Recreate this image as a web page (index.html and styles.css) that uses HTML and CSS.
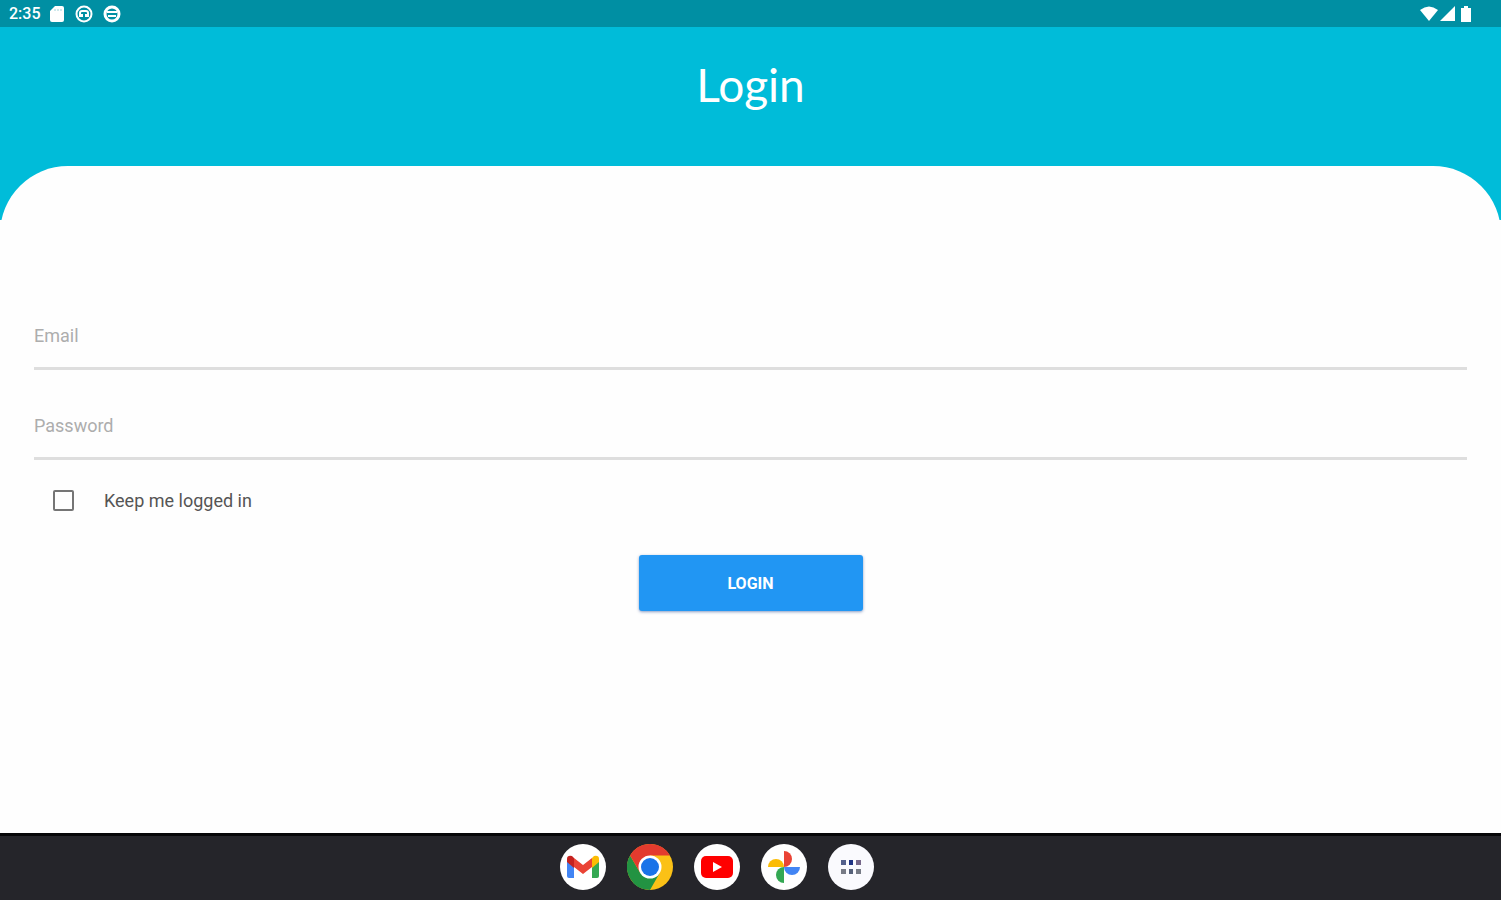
FILE: index.html
```html
<!DOCTYPE html>
<html lang="en">
<head>
  <meta charset="UTF-8">
  <meta name="viewport" content="width=device-width, initial-scale=1.0">
  <title>Login</title>
  <link rel="stylesheet" href="styles.css">
</head>
<body>
  <div class="status-bar">
    <div class="status-left">
      <span class="clock">2:35</span>
      <svg width="16" height="16" viewBox="0 0 16 16" aria-hidden="true">
        <path d="M6 0h7a2 2 0 0 1 2 2v12a2 2 0 0 1-2 2H3a2 2 0 0 1-2-2V5z" fill="#fff"/>
        <path d="M6 3v2M9 3v2M12 3v2" stroke="#9fd3da"/>
      </svg>
      <svg width="18" height="18" viewBox="0 0 18 18" aria-hidden="true">
        <circle cx="9" cy="9" r="7.500" fill="none" stroke="#fff" stroke-width="2"/>
        <path d="M5 12V8q0-2 2-2h4q2 0 2 2v4" fill="none" stroke="#fff" stroke-width="2"/>
        <path d="M5 9h3v3H5zM10 9h3v3h-3z" fill="#fff"/>
      </svg>
      <svg width="18" height="18" viewBox="0 0 18 18" aria-hidden="true">
        <circle cx="9" cy="9" r="7" fill="none" stroke="#fff" stroke-width="3"/>
        <path d="M4 7h10M5 11h8" stroke="#fff" stroke-width="2"/>
      </svg>
    </div>
    <div class="status-right">
      <svg width="18" height="16" viewBox="0 0 18 16" aria-hidden="true">
        <path d="M0 4Q9-3 18 4L9 15z" fill="#fff"/>
      </svg>
      <svg width="16" height="16" viewBox="0 0 16 16" aria-hidden="true">
        <path d="M16 0v15H1z" fill="#fff"/>
      </svg>
      <svg width="12" height="16" viewBox="0 0 12 16" aria-hidden="true">
        <path d="M4 0h4v2h3v14H1V2h3z" fill="#fff"/>
      </svg>
    </div>
  </div>

  <header class="header">
    <h1>Login</h1>
  </header>

  <main class="card">
    <form class="login-form">
      <input type="email" class="field" placeholder="Email" aria-label="Email">
      <input type="password" class="field" placeholder="Password" aria-label="Password">
      <div class="remember">
        <input type="checkbox" id="remember">
        <label for="remember">Keep me logged in</label>
      </div>
      <button type="button" class="login-button">LOGIN</button>
    </form>
  </main>

  <nav class="taskbar">
    <button class="app" aria-label="Gmail">
      <svg viewBox="0 0 46 46">
        <circle cx="23" cy="23" r="23" fill="#fff"/>
        <path d="M7 16v16q0 2 2 2h5V19z" fill="#4285f4"/>
        <path d="M39 16v16q0 2-2 2h-5V19z" fill="#34a853"/>
        <path d="M32 14l2-2q5-1 5 3v3l-7 6z" fill="#fbbc04"/>
        <path d="M14 14l-2-2q-5-1-5 3v3l7 6z" fill="#c5221f"/>
        <path d="M14 14l9 7 9-7v9l-9 7-9-7z" fill="#ea4335"/>
      </svg>
    </button>
    <button class="app" aria-label="Chrome">
      <svg viewBox="0 0 46 46">
        <circle cx="23" cy="23" r="23" fill="#fbc116"/>
        <path d="M3.080 11.500A23 23 0 0 0 23 46L33 28.500 23 23 13 28.500z" fill="#229342"/>
        <path d="M3.080 11.500A23 23 0 0 1 42.920 11.500H23V23L13 28.500z" fill="#e33b2e"/>
        <circle cx="23" cy="23" r="11.500" fill="#fff"/>
        <circle cx="23" cy="23" r="9" fill="#1a73e8"/>
      </svg>
    </button>
    <button class="app" aria-label="YouTube">
      <svg viewBox="0 0 46 46">
        <circle cx="23" cy="23" r="23" fill="#fff"/>
        <rect x="7" y="12" width="32" height="22" rx="5" fill="#f00"/>
        <path d="M19 18l9 5-9 5z" fill="#fff"/>
      </svg>
    </button>
    <button class="app" aria-label="Photos">
      <svg viewBox="0 0 46 46">
        <circle cx="23" cy="23" r="23" fill="#fff"/>
        <path d="M23 7a8 8 0 0 1 0 16z" fill="#ea4335"/>
        <path d="M39 23a8 8 0 0 1-16 0z" fill="#4285f4"/>
        <path d="M23 39a8 8 0 0 1 0-16z" fill="#34a853"/>
        <path d="M7 23a8 8 0 0 1 16 0z" fill="#fbbc04"/>
      </svg>
    </button>
    <button class="app" aria-label="All apps">
      <svg viewBox="0 0 46 46">
        <circle cx="23" cy="23" r="23" fill="#fafafe"/>
        <path d="M13 16h5v5h-5z" fill="#53608c"/>
        <path d="M21 16h4v5h-4z" fill="#203484"/>
        <path d="M28 16h5v5h-5z" fill="#76678a"/>
        <path d="M13 25h5v5h-5zM28 25h5v5h-5z" fill="#777b86"/>
        <path d="M21 25h4v5h-4z" fill="#56617a"/>
      </svg>
    </button>
  </nav>
</body>
</html>
```
FILE: styles.css
```css
* {
  box-sizing: border-box;
}
body {
  display: flex;
  flex-direction: column;
  min-height: 100vh;
  margin: 0;
  background: #fefefe;
  font-family: Roboto, sans-serif;
}
.status-bar {
  display: flex;
  justify-content: space-between;
  align-items: center;
  height: 27px;
  padding: 0 29px 0 9px;
  background: #008fa3;
  color: #fff;
}
.status-left {
  display: flex;
  align-items: center;
  gap: 10px;
}
.clock {
  margin-right: -2px;
  font-size: 16px;
  font-weight: 500;
}
.status-right {
  display: flex;
  align-items: center;
  gap: 1px;
}
.status-right svg:last-child {
  margin-left: 4px;
}
.header {
  height: 193px;
  padding-top: 28px;
  background: #00bcd9;
}
h1 {
  margin: 0;
  color: #fff;
  font-family: Lato, sans-serif;
  font-size: 46px;
  font-weight: 400;
  line-height: 60px;
  text-align: center;
}
.card {
  flex: 1;
  margin-top: -54px;
  padding: 140px 34px 40px;
  border-radius: 68px 68px 0 0;
  background: #fefefe;
}
.login-form {
  display: flex;
  flex-direction: column;
}
.field {
  width: 100%;
  height: 64px;
  margin-bottom: 26px;
  padding: 0 0 2px;
  border: none;
  border-bottom: 3px solid #dedede;
  background: transparent;
  color: #444;
  font-family: inherit;
  font-size: 18px;
  outline: none;
}
.field::placeholder {
  color: #adadad;
  opacity: 1;
}
.remember {
  display: flex;
  align-items: center;
  gap: 30px;
  height: 28px;
  padding-left: 19px;
  color: #555;
  font-size: 18px;
}
.remember input {
  appearance: none;
  width: 21px;
  height: 21px;
  margin: 0;
  border: 2px solid #757575;
  border-radius: 2px;
}
.remember input:checked {
  background: #2196f3;
}
.login-button {
  align-self: center;
  width: 224px;
  height: 56px;
  margin-top: 41px;
  border: none;
  border-radius: 3px;
  background: #2196f3;
  box-shadow: 0 1px 3px rgba(20, 60, 140, 0.5);
  color: #fff;
  font-family: inherit;
  font-size: 16px;
  font-weight: 700;
  cursor: pointer;
}
.taskbar {
  display: flex;
  justify-content: center;
  align-items: center;
  gap: 21px;
  height: 67px;
  padding: 0 67px 2px 0;
  border-top: 3px solid #060608;
  background: #25252a;
}
.app {
  width: 46px;
  height: 46px;
  padding: 0;
  border: none;
  border-radius: 50%;
  background: none;
  cursor: pointer;
}
.app svg {
  display: block;
}
```
